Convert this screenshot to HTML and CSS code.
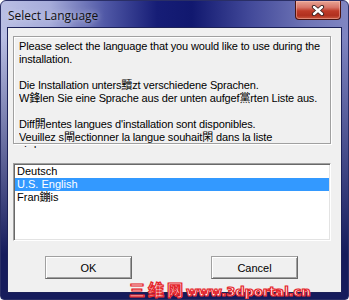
FILE: index.html
```html
<!DOCTYPE html>
<html>
<head>
<meta charset="utf-8">
<link rel="stylesheet" href="styles.css">
</head>
<body>
<div class="window">
  <div class="titlebar">
    <span class="title">Select Language</span>
    <div class="close">
      <svg width="14" height="11" viewBox="0 0 14 11">
        <path d="M3 2 L11 9 M11 2 L3 9" stroke="#3a2020" stroke-width="4.2" stroke-linecap="round"/>
        <path d="M3 2 L11 9 M11 2 L3 9" stroke="#ffffff" stroke-width="2.4" stroke-linecap="round"/>
      </svg>
    </div>
  </div>
  <div class="client">
    <div class="groupbox">
      <div class="statictext">Please select the language that you would like to use during the<br>installation.<br><br>Die Installation unters黷zt verschiedene Sprachen.<br>W鋒len Sie eine Sprache aus der unten aufgef黨rten Liste aus.<br><br>Diff閞entes langues d'installation sont disponibles.<br>Veuillez s閘ectionner la langue souhait閑 dans la liste<br>ci-dessous.</div>
    </div>
    <div class="listbox">
      <div class="item">Deutsch</div>
      <div class="item selected">U.S. English</div>
      <div class="item">Fran鏰is</div>
    </div>
    <div class="buttons">
      <div class="btn">OK</div>
      <div class="btn">Cancel</div>
    </div>
  </div>
  <div class="watermark"><span class="wm-cjk">三维网</span><span class="wm-lat">www.3dportal.cn</span></div>
</div>
</body>
</html>
```

FILE: styles.css
```css
html, body {
  margin: 0;
  padding: 0;
  background: #ffffff;
}
.window {
  position: relative;
  width: 349px;
  height: 300px;
  box-sizing: border-box;
  border: 1px solid #2a2f66;
  border-radius: 6px 6px 4px 4px;
  padding: 0 7px 7px 7px;
  background:
    linear-gradient(to bottom, rgba(22, 28, 92, 0) 12%, rgba(22, 28, 92, 0.45) 45%, #161c5c 85%),
    linear-gradient(to right, #babfe4 0%, #a6acda 14%, #5058a6 30%, #161d76 45%, #11186f 55%, #434a9a 72%, #6e74b6 88%, #8086c2 100%);
  display: flex;
  flex-direction: column;
  overflow: hidden;
}
.titlebar {
  height: 27px;
  display: flex;
  justify-content: space-between;
  align-items: flex-start;
}
.title {
  font-family: "Open Sans", "Noto Sans", sans-serif;
  font-size: 12px;
  color: #111;
  margin-top: 6px;
  text-shadow: 0 0 6px rgba(230, 232, 250, 0.9);
}
.close {
  width: 46px;
  height: 19px;
  box-sizing: border-box;
  border: 1px solid #4a1410;
  border-top: none;
  border-radius: 0 0 4px 4px;
  background: linear-gradient(to bottom, #e8a594 0%, #d8766a 35%, #bf3b28 55%, #b1301f 80%, #c9583f 100%);
  box-shadow: inset 0 0 0 1px rgba(255, 200, 190, 0.45);
  display: flex;
  align-items: center;
  justify-content: center;
}
.client {
  flex: 1;
  background: #f0f0f0;
  box-shadow: 0 0 0 1px #1c2158;
  display: flex;
  flex-direction: column;
  font-family: "Liberation Sans", Arial, "Noto Sans CJK SC", sans-serif;
  font-size: 11px;
  color: #000;
}
.groupbox {
  margin: 8px 0 0 5px;
  width: 318px;
  height: 108px;
  box-sizing: border-box;
  border: 1px solid #a0a0a0;
  box-shadow: 1px 1px 0 #fff, inset 1px 1px 0 #fff;
}
.statictext {
  margin: 3px 0 0 5px;
  height: 108px;
  overflow: hidden;
  line-height: 13px;
  letter-spacing: -0.15px;
  white-space: nowrap;
}
.listbox {
  margin: 19px 0 0 5px;
  width: 318px;
  height: 78px;
  box-sizing: border-box;
  background: #fff;
  border: 1px solid;
  border-color: #a0a0a0 #fff #fff #a0a0a0;
  box-shadow: inset 1px 1px 0 #696969, inset -1px -1px 0 #e3e3e3;
  padding: 1px;
}
.item {
  height: 13px;
  line-height: 13px;
  padding-left: 2px;
  white-space: nowrap;
}
.item.selected {
  background: #3399ff;
  color: #fff;
}
.buttons {
  margin-top: 15px;
  display: flex;
  gap: 79px;
  padding-left: 37px;
}
.btn {
  width: 87px;
  height: 23px;
  box-sizing: border-box;
  border: 1px solid;
  border-color: #a0a0a0 #696969 #696969 #a0a0a0;
  box-shadow: inset 1px 1px 0 #fff, inset -1px -1px 0 #a0a0a0;
  background: #f0f0f0;
  display: flex;
  align-items: center;
  justify-content: center;
}
.watermark {
  position: absolute;
  left: 128px;
  top: 279px;
  display: flex;
  align-items: baseline;
  font-weight: bold;
  color: #fff4f4;
  -webkit-text-stroke: 1.2px #e4262c;
  text-shadow: 0 0 1px #f06060;
}
.wm-cjk {
  font-family: "Noto Sans CJK SC", sans-serif;
  font-size: 16px;
  letter-spacing: 3px;
  line-height: 18px;
}
.wm-lat {
  font-family: "DejaVu Sans", sans-serif;
  font-size: 13px;
  line-height: 18px;
}
```
